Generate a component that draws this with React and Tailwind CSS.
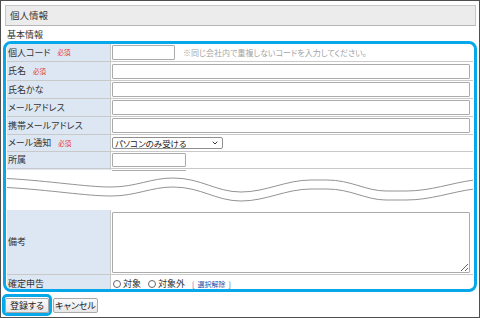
import React from "react";
import { ChevronDown } from "lucide-react";

const rows = [
  { label: "個人コード", req: true, kind: "code", h: "h-[18px]" },
  { label: "氏名", req: true, kind: "wide", h: "h-[19px]" },
  { label: "氏名かな", kind: "wide", h: "h-[18px]" },
  { label: "メールアドレス", kind: "wide", h: "h-[18px]" },
  { label: "携帯メールアドレス", kind: "wide", h: "h-[18px]" },
  { label: "メール通知", req: true, kind: "select", h: "h-[17px]" },
  { label: "所属", kind: "short", h: "h-[17px]" },
];

function Required() {
  return <span className="ml-[7px] text-[6.5px] text-[#e53935] leading-none">必須</span>;
}

function Field({ kind }) {
  if (kind === "code") {
    return (
      <div className="flex items-center">
        <div className="w-[63px] h-[15px] border border-[#ababab] rounded-[1px] bg-white" />
        <span className="ml-[8px] text-[8px] text-[#a3a3a3] leading-none">
          ※同じ会社内で重複しないコードを入力してください。
        </span>
      </div>
    );
  }
  if (kind === "wide") {
    return <div className="w-[358px] h-[15px] border border-[#ababab] rounded-[1px] bg-white" />;
  }
  if (kind === "select") {
    return (
      <div className="w-[111px] h-[12px] border border-[#8f8f8f] rounded-[2px] bg-white flex items-center justify-between pl-[2px] pr-[3px]">
        <span className="text-[8.5px] leading-none text-[#222]">パソコンのみ受ける</span>
        <ChevronDown size={8} strokeWidth={3} className="text-[#333]" />
      </div>
    );
  }
  return <div className="w-[74px] h-[14px] border border-[#ababab] rounded-[1px] bg-white" />;
}

function Radio({ text }) {
  return (
    <span className="flex items-center gap-[2px]">
      <span className="w-[8px] h-[8px] rounded-full border border-[#666] bg-white" />
      <span>{text}</span>
    </span>
  );
}

export default function App() {
  return (
    <div className="w-[480px] h-[318px] border border-[#4f4f4f] bg-white overflow-hidden text-[#333] font-['Noto_Sans_CJK_JP','Noto_Sans_CJK_SC',sans-serif] [font-feature-settings:'palt']">
      <div className="mt-[4px] ml-[4px] mr-[3px] h-[21px] border border-[#c6c6c6] border-b-[#b5b5b5] bg-[#ececec] flex items-center pl-[4px] text-[9.5px]">
        個人情報
      </div>
      <div className="h-[15px] flex items-center pt-[3px] pl-[6px] text-[9px]">基本情報</div>

      <div className="mx-[2px] border-[3px] border-[#06a8e9] rounded-[8px] px-[1px] overflow-hidden">
        {rows.map((r) => (
          <div key={r.label} className={`flex ${r.h} border-b border-[#c9c9c9]`}>
            <div className="w-[104px] bg-[#dde7f3] border-r border-[#c9c9c9] flex items-center pl-[1px] text-[9px]">
              <span>{r.label}</span>
              {r.req && <Required />}
            </div>
            <div className="flex-1 flex items-center pl-[1px]">
              <Field kind={r.kind} />
            </div>
          </div>
        ))}

        <div className="h-[41px] flex flex-col">
          <div className="flex h-[2px]">
            <div className="w-[104px] h-[1px] bg-[#dde7f3] border-r border-[#c9c9c9]" />
            <div className="ml-[1px] mt-[1px] w-[74px] h-[1px] bg-[#ababab]" />
          </div>
          <svg width="466" height="39" viewBox="6 171 466 39" className="block">
            <path
              d="M6 178.5 C50 181 85 187 110 187 C135 187 150 178 172 178 C200 178 215 192 240 192 C265 192 285 180 310 180 L326 180 C350 180 365 191 385 191 L405 191 C430 191 450 183 473 180"
              fill="none"
              stroke="#939393"
              strokeWidth="1"
            />
            <path
              d="M6 187.5 C50 190 85 196 110 196 C135 196 150 187 172 187 C200 187 215 201 240 201 C265 201 285 189 310 189 L326 189 C350 189 365 200 385 200 L405 200 C430 200 450 192 473 189"
              fill="none"
              stroke="#939393"
              strokeWidth="1"
            />
          </svg>
        </div>

        <div className="flex h-[65px] border-b border-[#c9c9c9]">
          <div className="w-[104px] bg-[#dde7f3] border-r border-[#c9c9c9] flex items-center pl-[1px] text-[9px]">
            備考
          </div>
          <div className="flex-1 pl-[1px] pt-[2px]">
            <textarea className="block w-[358px] h-[61px] border border-[#ababab] rounded-[1px] bg-white" />
          </div>
        </div>

        <div className="flex h-[14px]">
          <div className="w-[104px] bg-[#dde7f3] border-r border-[#c9c9c9] flex items-center pl-[1px] pt-[4px] text-[9px]">
            確定申告
          </div>
          <div className="flex-1 flex items-center pl-[2px] pt-[4px] gap-[7px] text-[9px]">
            <Radio text="対象" />
            <Radio text="対象外" />
            <span className="flex items-center text-[7px] text-[#1f4fa8]">
              <span>[</span>
              <span className="mx-[3px]">選択解除</span>
              <span>]</span>
            </span>
          </div>
        </div>
      </div>

      <div className="mt-[2px] ml-[1px] flex items-center">
        <div className="w-[50px] h-[22px] border-[3px] border-[#06a8e9] rounded-[5px] flex items-center">
          <button className="w-[44px] h-[15px] border border-[#a9a9a9] rounded-[2px] bg-gradient-to-b from-[#fbfbfb] to-[#e6e6e6] text-[9px] leading-none text-[#222]">
            登録する
          </button>
        </div>
        <button className="ml-[1px] w-[45px] h-[15px] border border-[#a9a9a9] rounded-[2px] bg-gradient-to-b from-[#fbfbfb] to-[#e6e6e6] text-[9px] leading-none text-[#222]">
          キャンセル
        </button>
      </div>
    </div>
  );
}
